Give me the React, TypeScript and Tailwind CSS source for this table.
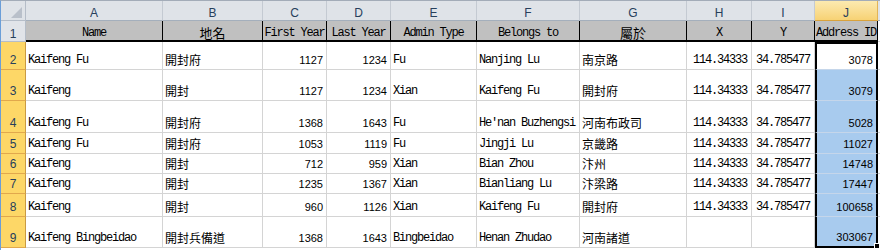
import React from "react";

const MONO =
  "font-['Liberation_Mono','Noto_Sans_CJK_TC',monospace] text-[12px] tracking-[-1.2px] text-black";
const CJK = "font-['Noto_Sans_CJK_TC',sans-serif] text-[12px] text-black";
const SANS = "font-['Liberation_Sans',sans-serif] text-[11px] text-black";
const HEAD = "font-['Liberation_Sans',sans-serif] text-[12px] text-[#27405c]";

type Kind = "txt" | "cjk" | "num" | "monoR";

const columns = ["A", "B", "C", "D", "E", "F", "G", "H", "I", "J"];
const kinds: Kind[] = ["txt", "cjk", "num", "num", "txt", "txt", "cjk", "monoR", "monoR", "num"];
const titles = ["Name", "地名", "First Year", "Last Year", "Admin Type", "Belongs to", "屬於", "X", "Y", "Address ID"];

const rows: string[][] = [
  ["Kaifeng Fu", "開封府", "1127", "1234", "Fu", "Nanjing Lu", "南京路", "114.34333", "34.785477", "3078"],
  ["Kaifeng", "開封", "1127", "1234", "Xian", "Kaifeng Fu", "開封府", "114.34333", "34.785477", "3079"],
  ["Kaifeng Fu", "開封府", "1368", "1643", "Fu", "He'nan Buzhengsi", "河南布政司", "114.34333", "34.785477", "5028"],
  ["Kaifeng Fu", "開封府", "1053", "1119", "Fu", "Jingji Lu", "京畿路", "114.34333", "34.785477", "11027"],
  ["Kaifeng", "開封", "712", "959", "Xian", "Bian Zhou", "汴州", "114.34333", "34.785477", "14748"],
  ["Kaifeng", "開封", "1235", "1367", "Xian", "Bianliang Lu", "汴梁路", "114.34333", "34.785477", "17447"],
  ["Kaifeng", "開封", "960", "1126", "Xian", "Kaifeng Fu", "開封府", "114.34333", "34.785477", "100658"],
  ["Kaifeng Bingbeidao", "開封兵備道", "1368", "1643", "Bingbeidao", "Henan Zhudao", "河南諸道", "", "", "303067"],
];

const kindClass: Record<Kind, string> = {
  txt: `${MONO} pl-[2px] justify-start`,
  cjk: `${CJK} pl-[2px] justify-start`,
  num: `${SANS} pr-[3px] justify-end`,
  monoR: `${MONO} pr-[4px] justify-end`,
};

function DataCell({ value, kind, col, row }: { value: string; kind: Kind; col: number; row: number }) {
  const isJ = col === 9;
  const first = row === 0;
  const last = row === rows.length - 1;

  if (isJ) {
    return (
      <div
        className={`relative flex items-end pb-[3px] leading-[12px] whitespace-nowrap border-l-2 border-r-2 border-l-black border-r-black ${
          first ? "border-t-2 border-t-black bg-white" : "bg-[#a8cbee]"
        } ${last ? "border-b-2 border-b-black" : "border-b border-b-[#c5d6ea]"} ${kindClass[kind]}`}
      >
        {value}
        {last && (
          <div className="absolute -bottom-[3px] -right-[4px] w-[6px] h-[6px] bg-black border border-white" />
        )}
      </div>
    );
  }

  return (
    <div
      className={`flex items-end pb-[3px] leading-[12px] whitespace-nowrap bg-white border-r border-b border-[#d4d4d4] ${kindClass[kind]}`}
    >
      {value}
    </div>
  );
}

export default function App() {
  return (
    <div className="w-[880px] h-[250px] overflow-hidden bg-white border-l border-l-[#6b9ed8] border-t border-t-[#a3acb8]">
      <div className="grid grid-cols-[25px_137px_100px_64px_64px_86px_103px_107px_65px_63px_63px_1fr] grid-rows-[20px_21px_28px_31px_32px_21px_20px_20px_23px_31px]">
        {/* Corner */}
        <div className="relative bg-[#dfe3e8] border-r border-b border-[#b5bdc8]">
          <div className="absolute bottom-[2px] right-[3px] w-0 h-0 border-l-[11px] border-l-transparent border-b-[11px] border-b-[#b9c0ca]" />
        </div>

        {/* Column letters */}
        {columns.map((c) =>
          c === "J" ? (
            <div
              key={c}
              className={`flex items-end justify-center leading-[14px] bg-gradient-to-b from-[#fceab0] to-[#f7d274] border-r border-r-[#e2b457] border-b border-b-[#d9a23c] ${HEAD}`}
            >
              {c}
            </div>
          ) : (
            <div
              key={c}
              className={`flex items-end justify-center leading-[14px] bg-[#dfe3e8] border-r border-r-[#c4cad2] border-b border-b-[#a4afbc] ${HEAD}`}
            >
              {c}
            </div>
          )
        )}
        <div className="bg-[#dfe3e8] border-b border-[#a4afbc]" />

        {/* Row 1: titles */}
        <div className={`flex items-end justify-center pb-[1px] leading-[12px] bg-[#e1e4e9] border-r border-r-[#b5bdc8] border-b border-b-[#b5bdc8] ${HEAD}`}>
          1
        </div>
        {titles.map((t, i) => (
          <div
            key={t}
            className={`flex items-end justify-center pb-[1px] leading-[12px] whitespace-nowrap bg-[#c0c0c0] border-r border-r-black border-b-2 border-b-black ${
              kinds[i] === "cjk" ? "font-['Noto_Sans_CJK_TC',sans-serif] text-[13px] text-black" : MONO
            }`}
          >
            {t}
          </div>
        ))}
        <div className="bg-white border-b border-[#d4d4d4]" />

        {/* Data rows */}
        {rows.map((r, ri) => (
          <React.Fragment key={ri}>
            <div
              className={`flex items-end justify-center pb-[2px] leading-[14px] bg-[#fdd767] border-r border-r-[#c99a43] border-b border-b-[#e1a84c] ${HEAD}`}
            >
              {ri + 2}
            </div>
            {r.map((v, ci) => (
              <DataCell key={ci} value={v} kind={kinds[ci]} col={ci} row={ri} />
            ))}
            <div className="bg-white border-b border-[#d4d4d4]" />
          </React.Fragment>
        ))}
      </div>
    </div>
  );
}
